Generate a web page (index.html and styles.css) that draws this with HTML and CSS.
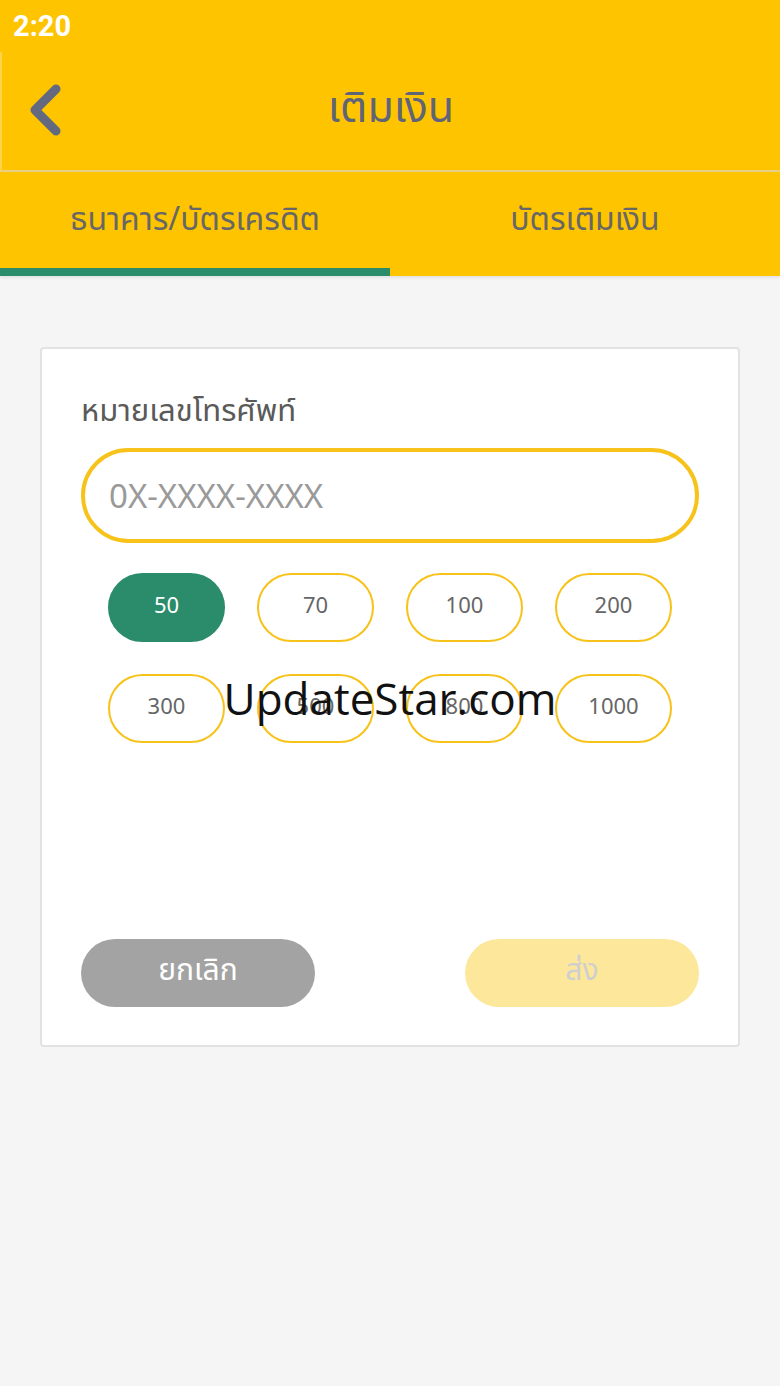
FILE: index.html
```html
<!DOCTYPE html>
<html>
    <head>
    <meta charset="utf-8">
    <meta name="viewport" content="width=device-width, initial-scale=1, shrink-to-fit=no">
        <link rel="stylesheet" href="styles.css">
    </head>

    <body>
        <!--top bars-->
        <div class="statusbar">2:20</div>
        <div class="appbar">
            <svg class="back" width="36" height="52" viewBox="0 0 36 52">
                <path d="M30 5 L9 26 L30 47" fill="none" stroke="#636a80" stroke-width="9" stroke-linecap="round" stroke-linejoin="round"/>
            </svg>
            <h1>เติมเงิน</h1>
        </div>
        <div class="tabs">
            <div class="tab active">ธนาคาร/บัตรเครดิต</div>
            <div class="tab">บัตรเติมเงิน</div>
        </div>

        <!--topup form-->
        <div class="page">
            <form class="card">
                <label class="label">หมายเลขโทรศัพท์</label>
                <input type="text" class="phone" placeholder="0X-XXXX-XXXX">

                <div class="amounts">
                    <button type="button" class="amount selected">50</button>
                    <button type="button" class="amount">70</button>
                    <button type="button" class="amount">100</button>
                    <button type="button" class="amount">200</button>
                    <button type="button" class="amount">300</button>
                    <button type="button" class="amount">500</button>
                    <button type="button" class="amount">800</button>
                    <button type="button" class="amount">1000</button>
                </div>

                <div class="actions">
                    <button type="button" class="cancelbtn">ยกเลิก</button>
                    <button type="button" class="sendbtn">ส่ง</button>
                </div>
            </form>
        </div>

        <div class="watermark">UpdateStar.com</div>
    </body>
</html>
```

FILE: styles.css
```css
* {box-sizing: border-box}

body {
  margin: 0;
  background: #f5f5f5;
  font-family: "Noto Sans", "Noto Sans Thai", "DejaVu Sans", sans-serif;
  color: #666;
  min-height: 1386px;
  position: relative;
}

/* status + app bar */
.statusbar {
  background: #ffc400;
  height: 52px;
  padding: 8px 13px 0;
  color: #fff;
  font-family: "Roboto", sans-serif;
  font-weight: bold;
  font-size: 29px;
  line-height: 36px;
}

.appbar {
  background: #ffc400;
  height: 120px;
  border-left: 2px solid #ffd34a;
  border-bottom: 2px solid #e8cf86;
  display: flex;
  align-items: center;
  justify-content: center;
  position: relative;
}

.appbar .back {
  position: absolute;
  left: 24px;
  top: 32px;
}

.appbar h1 {
  margin: 0 0 6px;
  font-size: 43px;
  font-weight: normal;
  color: #5f6577;
}

/* tabs */
.tabs {
  background: #ffc400;
  display: flex;
  height: 104px;
  box-shadow: 0 2px 3px rgba(0,0,0,0.08);
}

.tab {
  flex: 1;
  display: flex;
  align-items: center;
  justify-content: center;
  font-size: 32px;
  color: #676767;
  border-bottom: 8px solid transparent;
}

.tab.active {
  border-bottom-color: #2a8c6a;
}

/* card */
.page {
  padding: 71px 40px;
}

.card {
  background: #fff;
  border: 2px solid #e2e2e2;
  border-radius: 4px;
  height: 700px;
  padding: 40px 39px 38px 39px;
  display: flex;
  flex-direction: column;
}

.label {
  font-size: 31px;
  color: #5a5a5a;
  line-height: 40px;
}

.phone {
  margin-top: 19px;
  width: 100%;
  height: 95px;
  border: 4px solid #f7c21a;
  border-radius: 48px;
  padding: 0 24px;
  font-family: inherit;
  font-size: 33px;
  color: #555;
  outline: none;
}

.phone::placeholder {
  color: #9a9a9a;
}

.amounts {
  margin-top: 30px;
  padding: 0 27px;
  display: grid;
  grid-template-columns: repeat(4, 117px);
  justify-content: space-between;
  row-gap: 32px;
}

.amount {
  height: 69px;
  border: 2px solid #f7c21a;
  border-radius: 35px;
  background: #fff;
  font-family: inherit;
  font-size: 22px;
  color: #666;
  padding: 0 0 7px;
}

.amount.selected {
  background: #2a8c6a;
  border-color: #2a8c6a;
  color: #fff;
}

.actions {
  margin-top: auto;
  display: flex;
  justify-content: space-between;
}

.cancelbtn, .sendbtn {
  width: 234px;
  height: 68px;
  border: none;
  border-radius: 34px;
  font-family: inherit;
  font-size: 30px;
  padding: 0 0 4px;
}

.cancelbtn {
  background-color: #a3a3a3;
  color: #fff;
}

.sendbtn {
  background-color: #fde79b;
  color: #cfcfcf;
}

/* overlay text from the screenshot */
.watermark {
  position: absolute;
  left: 0;
  right: 0;
  top: 668px;
  text-align: center;
  font-family: "Open Sans", sans-serif;
  font-size: 44px;
  color: #111;
}
```
